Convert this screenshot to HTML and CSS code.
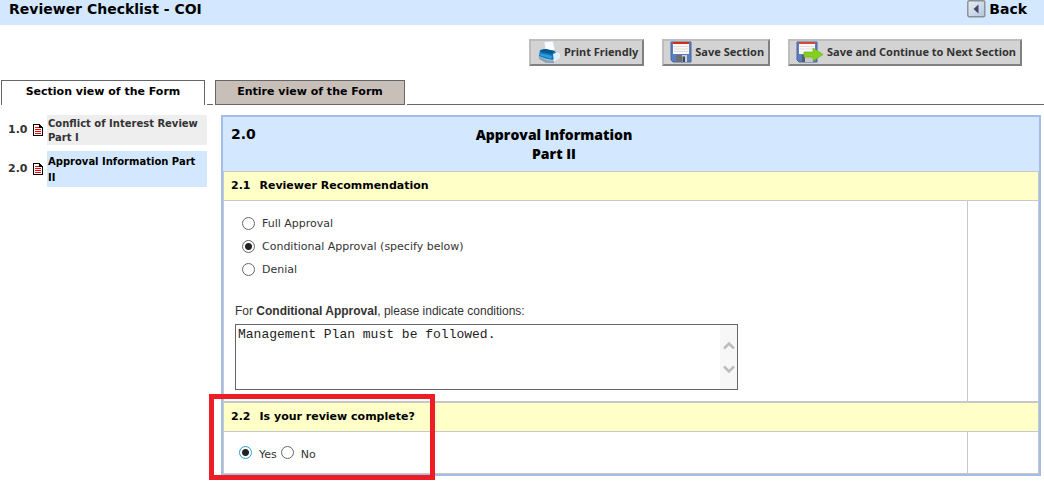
FILE: index.html
```html
<!DOCTYPE html>
<html lang="en">
<head>
<meta charset="utf-8">
<title>Reviewer Checklist - COI</title>
<link rel="stylesheet" href="styles.css">
</head>
<body>
<header class="page-header">
  <h1 class="page-title">Reviewer Checklist - COI</h1>
  <a class="back" href="#">
    <svg class="back-icon" width="19" height="18" viewBox="0 0 19 18" aria-hidden="true">
      <defs><linearGradient id="bk" x1="0" y1="0" x2="1" y2="1"><stop offset="0" stop-color="#e8eff6"/><stop offset="1" stop-color="#b4c6d8"/></linearGradient></defs>
      <rect x=".8" y=".8" width="17" height="16" rx="1.5" fill="url(#bk)" stroke="#8a8d96" stroke-width="1.4"/>
      <path d="M11.5 4.5v9L6.5 9z" fill="#40466a"/>
    </svg>
    Back
  </a>
</header>

<div class="toolbar">
  <button type="button" class="tool">
    <svg width="24" height="22" viewBox="0 0 24 22" aria-hidden="true">
      <path d="M1 16l2-6 13-1 6 3 1 4-5 5-9 1z" fill="#b9cbdc"/>
      <path d="M2 15l8 4 7 1v2H9l-7-4z" fill="#8ca3b8"/>
      <path d="M7 1l9-1 2 9-9 2z" fill="#fafcff" stroke="#c7d5e2" stroke-width=".6"/>
      <path d="M3 9l5-1 10 2 1 3-3 6-6-1-8-3z" fill="#0878bd"/>
      <path d="M4 9l5-1 8 2-2 3-11-2z" fill="#07558b"/>
      <path d="M3 12l12 3-1 3-12-4z" fill="#2a9bdc"/>
      <path d="M16 13l5-2 2 2v4l-6 4z" fill="#e3edf5"/>
    </svg>
    Print Friendly
  </button>
  <button type="button" class="tool">
    <svg width="22" height="22" viewBox="0 0 22 22" aria-hidden="true">
      <path d="M1 1h20v20H3l-2-2z" fill="#5a7fbc" stroke="#4568a3" stroke-width="1"/>
      <path d="M3 1h16v12H3z" fill="#f8f8f8"/><path d="M3 1h16v2H3z" fill="#d92c15"/>
      <path d="M4 5.5h14M4 8h14M4 10.5h14" stroke="#dddddd"/>
      <path d="M6 14h11v7H6z" fill="#cfd2d4"/><path d="M6 14h6v7H6z" fill="#6a6f78"/><path d="M12.5 15.5h2.5V21h-2.5z" fill="#3f4957"/>
    </svg>
    Save Section
  </button>
  <button type="button" class="tool">
    <svg width="28" height="22" viewBox="0 0 28 22" aria-hidden="true">
      <path d="M1 1h20v20H3l-2-2z" fill="#5a7fbc" stroke="#4568a3" stroke-width="1"/>
      <path d="M3 1h16v12H3z" fill="#f8f8f8"/><path d="M3 1h16v2H3z" fill="#dc4638"/>
      <path d="M4 5.5h14M4 8h14" stroke="#dddddd"/>
      <path d="M6 14h11v7H6z" fill="#c4c8cc"/><path d="M6 14h3v7H6z" fill="#565d68"/>
      <path d="M8 11h9V7l10 6.5L17 20v-4H8z" fill="#85cf20" stroke="#6db514" stroke-width=".7"/>
    </svg>
    Save and Continue to Next Section
  </button>
</div>

<nav class="tabs">
  <a class="tab tab-active" href="#">Section view of the Form</a>
  <span class="tab-gap"></span>
  <a class="tab" href="#">Entire view of the Form</a>
  <span class="tab-rest"></span>
</nav>

<div class="content">
  <nav class="sections">
    <a class="section" href="#">
      <span class="section-no">1.0</span>
      <svg width="10" height="12" viewBox="0 0 10 12" shape-rendering="crispEdges" aria-hidden="true"><path d="M0 0h7v1h1v1h1v1h1v9H0z" fill="#000"/><path d="M1 1h5v3h3v7H1z" fill="#fff"/><path d="M2 3h4v1H2zM2 5h6v1H2zM2 7h6v1H2zM2 9h6v1H2z" fill="#f00"/></svg>
      <span class="section-name">Conflict of Interest Review Part I</span>
    </a>
    <a class="section section-current" href="#">
      <span class="section-no">2.0</span>
      <svg width="10" height="12" viewBox="0 0 10 12" shape-rendering="crispEdges" aria-hidden="true"><path d="M0 0h7v1h1v1h1v1h1v9H0z" fill="#000"/><path d="M1 1h5v3h3v7H1z" fill="#fff"/><path d="M2 3h4v1H2zM2 5h6v1H2zM2 7h6v1H2zM2 9h6v1H2z" fill="#f00"/></svg>
      <span class="section-name">Approval Information Part II</span>
    </a>
  </nav>

  <main class="panel">
    <div class="panel-head">
      <span class="panel-no">2.0</span>
      <h2 class="panel-title">Approval Information<br>Part II</h2>
    </div>

    <section class="question">
      <h3 class="question-head"><span>2.1</span><span>Reviewer Recommendation</span></h3>
      <div class="question-body">
        <div class="answer">
          <div class="choices">
            <label class="choice"><input type="radio" name="rec">Full Approval</label>
            <label class="choice"><input type="radio" name="rec" checked>Conditional Approval (specify below)</label>
            <label class="choice"><input type="radio" name="rec">Denial</label>
          </div>
          <label class="prompt" for="conditions">For <b>Conditional Approval</b>, please indicate conditions:</label>
          <div class="memo">
            <textarea id="conditions" class="memo-text">Management Plan must be followed.</textarea>
            <div class="memo-scroll">
              <svg width="12" height="9" viewBox="0 0 12 9" aria-hidden="true"><path d="M1 7.5L6 2.5l5 5" fill="none" stroke="#bdbdbd" stroke-width="2.6"/></svg>
              <svg width="12" height="9" viewBox="0 0 12 9" aria-hidden="true"><path d="M1 1.5l5 5 5-5" fill="none" stroke="#bdbdbd" stroke-width="2.6"/></svg>
            </div>
          </div>
        </div>
        <div class="side"></div>
      </div>
    </section>

    <section class="question question-last">
      <h3 class="question-head"><span>2.2</span><span>Is your review complete?</span></h3>
      <div class="question-body">
        <div class="answer answer-inline">
          <label class="choice-inline"><input class="focused" type="radio" name="done" checked><span>Yes</span></label>
          <label class="choice-inline"><input type="radio" name="done"><span>No</span></label>
        </div>
        <div class="side"></div>
      </div>
      <div class="highlight"></div>
    </section>
  </main>
</div>
</body>
</html>
```
FILE: styles.css
```css
* { box-sizing: border-box; }
body {
  margin: 0;
  background: #fff;
  color: #000;
  font: 11px/14px "DejaVu Sans", Verdana, sans-serif;
}
a { color: inherit; text-decoration: none; }
h1, h2, h3 { margin: 0; }

.page-header {
  display: flex;
  justify-content: space-between;
  height: 25px;
  padding: 0 17px 0 9px;
  background: #d3e8ff;
}
.page-title, .back { font-size: 14px; line-height: 19px; font-weight: bold; }
.back { display: flex; gap: 3px; }

.toolbar {
  display: flex;
  justify-content: flex-end;
  gap: 18px;
  padding: 14px 22px 14px 0;
}
.tool {
  display: flex;
  align-items: center;
  gap: 3px;
  height: 27px;
  padding: 0 4px 1px 6px;
  border: 2px solid;
  border-color: #bdbdbd #808080 #808080 #bdbdbd;
  background: #d3d3d3;
  color: #333;
  font: bold 11px/14px "Noto Sans", Tahoma, sans-serif;
  white-space: nowrap;
}

.tabs { display: flex; height: 25px; padding-left: 1px; }
.tab {
  width: 190px;
  border: 1px solid #666;
  background: #c8bfb9;
  font-weight: bold;
  line-height: 21px;
  text-align: center;
}
.tab-active { width: 204px; border-bottom: 0; background: #fff; }
.tab-gap { width: 6px; margin: 0 2px; border-bottom: 1px solid #666; }
.tab-rest { flex: 1; margin-left: 2px; border-bottom: 1px solid #666; }

.content { display: flex; align-items: flex-start; gap: 14px; padding: 10px 3px 8px 8px; }
.sections { width: 199px; display: flex; flex-direction: column; gap: 6px; font-weight: bold; }
.section { display: grid; grid-template-columns: 25px 14px 1fr; align-items: center; color: #333; }
.section-name { padding: 2px 1px 0; background: #eee; font-size: 10px; }
.section-current .section-name { padding: 3px 1px 1px; background: #d3e8ff; color: #000; line-height: 16px; }

.panel { flex: 1; border: 2px solid #a3bde9; }
.panel-head {
  display: grid;
  grid-template-columns: 110px 426px 1fr;
  padding: 8px;
  background: #d3e8ff;
}
.panel-no { font-size: 14px; line-height: 18px; font-weight: bold; }
.panel-title { font: 800 14px/19px "Open Sans", "Arial Black", sans-serif; text-align: center; }

.question { border: 1px solid #c8c8c8; }
.question-head {
  display: flex;
  gap: 9px;
  padding: 0 7px;
  border-bottom: 1px solid #c8c8c8;
  background: #ffffc8;
  font-size: 11px;
  line-height: 28px;
}
.question-body { display: flex; }
.answer { flex: 1; padding: 11px; border-right: 1px solid #c8c8c8; color: #333; }
.side { width: 70px; }
.choice { display: flex; align-items: center; gap: 7px; height: 23px; padding-left: 7px; }

input[type="radio"] {
  appearance: none;
  width: 13px;
  height: 13px;
  margin: 0;
  border: 1px solid #666;
  border-radius: 50%;
  background: #fff;
}
input[type="radio"]:checked { background: radial-gradient(circle, #222 3px, #fff 4px); }
input.focused { border-color: #2f9bd0; }

.prompt { display: block; margin: 23px 0 6px; font: 12px/14px "Liberation Sans", Arial, sans-serif; }
.memo { display: flex; width: 503px; height: 66px; border: 1px solid #666; }
.memo-text {
  flex: 1;
  padding: 2px;
  border: 0;
  outline: 0;
  resize: none;
  overflow: hidden;
  background: #fff;
  color: #222;
  font: 13px/15px "Liberation Mono", "Courier New", monospace;
}
.memo-scroll {
  width: 17px;
  display: flex;
  flex-direction: column;
  align-items: center;
  justify-content: center;
  gap: 15px;
  background: #f7f7f7;
}

.question-last { position: relative; }
.answer-inline { display: flex; gap: 4px; padding: 14px 15px 10px; }
.choice-inline { display: flex; gap: 7px; line-height: 17px; }
.highlight {
  position: absolute;
  top: -9px;
  left: -15px;
  width: 226px;
  height: 86px;
  border: 5px solid #ee1c25;
  pointer-events: none;
}
```
